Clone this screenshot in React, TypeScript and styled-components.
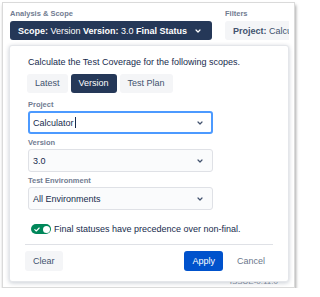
import React from "react";
import styled, { createGlobalStyle } from "styled-components";

const Global = createGlobalStyle`
  html, body { margin: 0; padding: 0; background: #ffffff; }
  body { font-family: "Liberation Sans", Arial, Helvetica, sans-serif; color: #172b4d; }
  * { box-sizing: border-box; }
`;

const Frame = styled.div`
  margin: 2px 0 0 2px;
  width: 293px;
  height: 286px;
  border: 1px solid #dadada;
  box-shadow: 1px 3px 3px rgba(0, 0, 0, 0.35);
  background: #ffffff;
  overflow: hidden;
  padding: 5px 0 0 6px;
`;

const Column = styled.div`
  width: 280px;
  display: flex;
  flex-direction: column;
`;

const Header = styled.div`
  display: flex;
  gap: 13px;
  padding-left: 1px;
  overflow: hidden;
  width: 280px;
`;

const Group = styled.div`
  display: flex;
  flex-direction: column;
  gap: 2px;
  flex-shrink: 0;
`;

const SmallLabel = styled.div`
  font-size: 7.5px;
  font-weight: 700;
  line-height: 11px;
  color: #717c91;
  white-space: nowrap;
`;

const HeaderButton = styled.div<{ $dark?: boolean; $width?: number }>`
  display: flex;
  align-items: center;
  justify-content: space-between;
  height: 19px;
  width: ${(p) => (p.$width ? `${p.$width}px` : "auto")};
  padding: ${(p) => (p.$dark ? "0 11px 0 8px" : "0 8px")};
  border-radius: 3px;
  background: ${(p) => (p.$dark ? "#253858" : "#f4f5f7")};
  color: ${(p) => (p.$dark ? "#ffffff" : "#42526e")};
  font-size: 9px;
  white-space: nowrap;
  b { font-weight: 700; }
`;

const Popover = styled.div`
  position: relative;
  z-index: 1;
  margin-top: 5px;
  width: 280px;
  background: #ffffff;
  border: 1px solid #e4e6ea;
  border-radius: 3px;
  box-shadow: 0 1px 4px rgba(9, 30, 66, 0.22);
`;

const Body = styled.div`
  padding: 9px 18px 10px 18px;
  display: flex;
  flex-direction: column;
`;

const Intro = styled.div`
  font-size: 9px;
  line-height: 14px;
  color: #172b4d;
  white-space: nowrap;
`;

const Tabs = styled.div`
  display: flex;
  gap: 3px;
  margin-top: 5px;
  margin-left: -1px;
`;

const Tab = styled.div<{ $active?: boolean }>`
  height: 19px;
  line-height: 19px;
  padding: 0 8px;
  border-radius: 3px;
  font-size: 9px;
  background: ${(p) => (p.$active ? "#253858" : "#f4f5f7")};
  color: ${(p) => (p.$active ? "#ffffff" : "#42526e")};
`;

const Fields = styled.div`
  display: flex;
  flex-direction: column;
  gap: 3px;
  margin-top: 6px;
`;

const Field = styled.div`
  display: flex;
  flex-direction: column;
`;

const FieldLabel = styled.div`
  font-size: 7.5px;
  font-weight: 700;
  line-height: 12px;
  color: #717c91;
`;

const Select = styled.div<{ $focused?: boolean }>`
  display: flex;
  align-items: center;
  justify-content: space-between;
  width: 185px;
  height: 23px;
  border-radius: 3px;
  border: ${(p) => (p.$focused ? "2px solid #4c9aff" : "1px solid #dfe1e6")};
  background: ${(p) => (p.$focused ? "#ffffff" : "#fafbfc")};
  padding: ${(p) => (p.$focused ? "0 8px 0 3px" : "0 9px 0 4px")};
  font-size: 9px;
  color: #172b4d;
`;

const Value = styled.span`
  display: flex;
  align-items: center;
`;

const Caret = styled.span`
  display: inline-block;
  width: 1px;
  height: 11px;
  background: #172b4d;
  margin-left: 1px;
`;

const ToggleRow = styled.div`
  display: flex;
  align-items: center;
  gap: 3px;
  margin-top: 14px;
  padding-left: 3px;
  font-size: 9px;
  color: #172b4d;
`;

const Toggle = styled.span`
  display: flex;
  align-items: center;
  justify-content: space-between;
  width: 20px;
  height: 10px;
  border-radius: 5px;
  background: #00875a;
  padding: 0 1.5px 0 3px;
`;

const Knob = styled.span`
  width: 7px;
  height: 7px;
  border-radius: 50%;
  background: #ffffff;
`;

const Divider = styled.div`
  height: 1px;
  margin: 0 15px;
  background: #dfe1e6;
`;

const Footer = styled.div`
  display: flex;
  align-items: center;
  padding: 6px 15px 10px 15px;
`;

const Spacer = styled.div`
  flex: 1;
`;

const Button = styled.div<{ $variant: "default" | "primary" | "subtle" }>`
  height: 20px;
  line-height: 20px;
  padding: 0 8px;
  border-radius: 3px;
  font-size: 9px;
  margin-left: ${(p) => (p.$variant === "subtle" ? "6px" : "0")};
  background: ${(p) =>
    p.$variant === "primary" ? "#0052cc" : p.$variant === "default" ? "#f4f5f7" : "transparent"};
  color: ${(p) =>
    p.$variant === "primary" ? "#ffffff" : p.$variant === "default" ? "#42526e" : "#6b778c"};
`;

const BehindText = styled.div`
  margin-top: -6px;
  padding-right: 11px;
  text-align: right;
  font-size: 8px;
  line-height: 11px;
  color: #8993a4;
  white-space: nowrap;
`;

const Chevron = ({ color }: { color: string }) => (
  <svg width="6" height="4" viewBox="0 0 6 4" aria-hidden>
    <path d="M1 1 L3 3 L5 1" fill="none" stroke={color} strokeWidth="1.2" strokeLinecap="round" strokeLinejoin="round" />
  </svg>
);

const Check = () => (
  <svg width="6" height="5" viewBox="0 0 6 5" aria-hidden>
    <path d="M0.8 2.6 L2.3 4 L5.2 1" fill="none" stroke="#ffffff" strokeWidth="1.1" strokeLinecap="round" strokeLinejoin="round" />
  </svg>
);

export default function App() {
  return (
    <>
      <Global />
      <Frame>
        <Column>
          <Header>
            <Group>
              <SmallLabel>Analysis &amp; Scope</SmallLabel>
              <HeaderButton $dark $width={202}>
                <span>
                  <b>Scope:</b> Version <b>Version:</b> 3.0 <b>Final Status</b>
                </span>
                <Chevron color="#ffffff" />
              </HeaderButton>
            </Group>
            <Group>
              <SmallLabel>Filters</SmallLabel>
              <HeaderButton>
                <span>
                  <b>Project:</b> Calculator
                </span>
              </HeaderButton>
            </Group>
          </Header>
          <Popover>
            <Body>
              <Intro>Calculate the Test Coverage for the following scopes.</Intro>
              <Tabs>
                <Tab>Latest</Tab>
                <Tab $active>Version</Tab>
                <Tab>Test Plan</Tab>
              </Tabs>
              <Fields>
                <Field>
                  <FieldLabel>Project</FieldLabel>
                  <Select $focused>
                    <Value>
                      Calculator
                      <Caret />
                    </Value>
                    <Chevron color="#42526e" />
                  </Select>
                </Field>
                <Field>
                  <FieldLabel>Version</FieldLabel>
                  <Select>
                    <Value>3.0</Value>
                    <Chevron color="#42526e" />
                  </Select>
                </Field>
                <Field>
                  <FieldLabel>Test Environment</FieldLabel>
                  <Select>
                    <Value>All Environments</Value>
                    <Chevron color="#42526e" />
                  </Select>
                </Field>
              </Fields>
              <ToggleRow>
                <Toggle>
                  <Check />
                  <Knob />
                </Toggle>
                <span>Final statuses have precedence over non-final.</span>
              </ToggleRow>
            </Body>
            <Divider />
            <Footer>
              <Button $variant="default">Clear</Button>
              <Spacer />
              <Button $variant="primary">Apply</Button>
              <Button $variant="subtle">Cancel</Button>
            </Footer>
          </Popover>
          <BehindText>ISSUE-0.11.0</BehindText>
        </Column>
      </Frame>
    </>
  );
}
